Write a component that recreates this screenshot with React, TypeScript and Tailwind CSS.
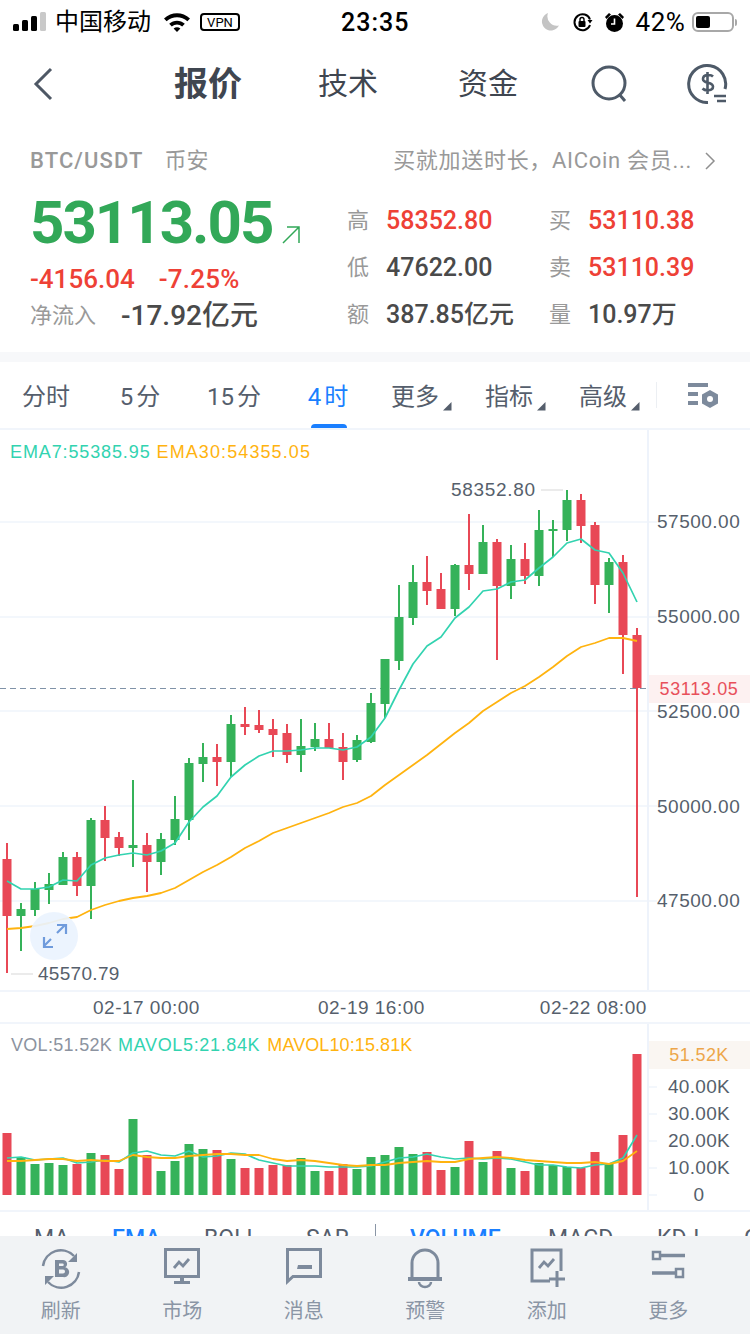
import React from "react";

type Candle = [number, number, number, number, "r" | "g"];

const GREEN = "#35b259";
const RED = "#e84856";
const TEAL = "#32d3b0";
const ORANGE = "#ffb30f";

// wickTop, wickBottom, bodyTop, bodyBottom, colour
const candles: Candle[] = [
  [843, 973, 859, 916, "r"], [903, 951, 909, 916, "g"], [882, 916, 889, 910, "g"], [873, 904, 884, 890, "g"],
  [852, 885, 857, 885, "g"], [852, 896, 857, 886, "r"], [818, 919, 820, 886, "g"], [806, 861, 820, 838, "r"],
  [832, 856, 837, 848, "r"], [780, 867, 845, 848, "g"], [833, 892, 845, 862, "r"], [833, 875, 839, 862, "g"],
  [796, 845, 819, 840, "g"], [758, 840, 763, 820, "g"], [743, 782, 757, 764, "g"], [744, 786, 757, 762, "r"],
  [715, 777, 724, 762, "g"], [707, 735, 724, 727, "r"], [710, 733, 725, 730, "r"], [719, 757, 729, 735, "r"],
  [724, 763, 733, 755, "r"], [719, 772, 746, 755, "g"], [723, 751, 739, 747, "g"], [723, 748, 739, 748, "r"],
  [733, 780, 747, 762, "r"], [735, 762, 740, 760, "g"], [693, 743, 703, 742, "g"], [659, 718, 659, 704, "g"],
  [585, 670, 617, 661, "g"], [565, 625, 582, 618, "g"], [556, 605, 582, 591, "r"], [573, 609, 589, 609, "r"],
  [564, 616, 565, 609, "g"], [514, 590, 565, 574, "r"], [525, 574, 542, 574, "g"], [539, 660, 542, 586, "r"],
  [545, 599, 559, 586, "g"], [543, 584, 559, 576, "r"], [510, 586, 530, 576, "g"], [520, 557, 529, 531, "g"],
  [490, 541, 500, 530, "g"], [494, 543, 500, 526, "r"], [522, 604, 525, 585, "r"], [558, 613, 562, 585, "g"],
  [555, 674, 562, 635, "r"], [628, 897, 635, 688, "r"],
];

const ema7 = [
  881, 889, 889, 887, 880, 881, 865, 858, 855, 853, 855, 851, 843, 822, 807, 796, 777, 765, 756, 751, 751, 750, 748,
  748, 750, 747, 737, 718, 690, 664, 646, 637, 618, 607, 591, 589, 582, 580, 568, 557, 543, 539, 550, 553, 573, 602,
];

const ema30 = [
  929, 928, 926, 923, 919, 917, 910, 905, 901, 898, 896, 893, 888, 880, 872, 865, 857, 848, 841, 833, 828, 823, 818,
  813, 807, 803, 796, 785, 775, 765, 755, 744, 733, 723, 711, 702, 693, 686, 677, 667, 656, 647, 643, 638, 638, 641,
];

const volumes = [
  1133, 1157, 1164, 1163, 1165, 1164, 1153, 1155, 1169, 1119, 1155, 1171, 1161, 1144, 1149, 1150, 1159, 1168, 1168,
  1165, 1165, 1158, 1171, 1171, 1164, 1169, 1157, 1155, 1147, 1154, 1152, 1170, 1167, 1141, 1162, 1151, 1168, 1171,
  1163, 1165, 1167, 1168, 1152, 1163, 1135, 1054,
];

const mavol5 = [
  1158, 1157, 1160, 1159, 1158, 1163, 1162, 1160, 1162, 1153, 1151, 1155, 1156, 1151, 1157, 1156, 1153, 1154, 1160,
  1163, 1166, 1166, 1166, 1167, 1167, 1167, 1166, 1162, 1158, 1157, 1154, 1157, 1159, 1158, 1159, 1158, 1159, 1162,
  1165, 1165, 1167, 1168, 1165, 1164, 1158, 1135,
];

const mavol10 = [
  1161, 1161, 1160, 1159, 1159, 1161, 1160, 1161, 1161, 1155, 1157, 1158, 1158, 1156, 1155, 1154, 1154, 1155, 1155,
  1159, 1161, 1160, 1161, 1163, 1165, 1166, 1165, 1165, 1163, 1162, 1161, 1162, 1162, 1159, 1158, 1157, 1158, 1160,
  1161, 1162, 1163, 1163, 1162, 1164, 1161, 1151,
];

const colX = (i: number) => 7 + 14 * i;
const linePoints = (ys: number[]) => ys.map((y, i) => `${colX(i)},${y}`).join(" ");

const KLine = () => (
  <svg className="absolute inset-0" width="750" height="560" viewBox="0 430 750 560">
    {[522, 617, 711, 806, 901].map((y) => (
      <line key={y} x1="0" x2="657" y1={y} y2={y} stroke="#f3f7fc" strokeWidth="2" />
    ))}
    <line x1="0" x2="647" y1="688.5" y2="688.5" stroke="#8092a8" strokeWidth="1" strokeDasharray="6 4" />
    {candles.map(([wt, wb, bt, bb, c], i) => {
      const fill = c === "r" ? RED : GREEN;
      return (
        <g key={i}>
          <rect x={colX(i) - 1} y={wt} width="2" height={wb - wt} fill={fill} />
          <rect x={colX(i) - 4.5} y={bt} width="9" height={bb - bt} fill={fill} />
        </g>
      );
    })}
    <polyline points={linePoints(ema7)} fill="none" stroke={TEAL} strokeWidth="1.7" strokeLinejoin="round" />
    <polyline points={linePoints(ema30)} fill="none" stroke={ORANGE} strokeWidth="1.8" strokeLinejoin="round" />
    <line x1="541" x2="563" y1="490" y2="490" stroke="#ebebeb" strokeWidth="2" />
    <line x1="11" x2="33" y1="974" y2="974" stroke="#ebebeb" strokeWidth="2" />
    <circle cx="54" cy="936" r="24" fill="#eaf3fe" fillOpacity="0.92" />
    <g fill="none" stroke="#6f9bdc" strokeWidth="2.2">
      <path d="M57 933l8-8M57 925h9v9" />
      <path d="M51 939l-7 7M44 937v10h9" />
    </g>
  </svg>
);

const VolumeChart = () => (
  <svg className="absolute inset-0" width="750" height="186" viewBox="0 1024 750 186">
    {[1087, 1114, 1141, 1168, 1195].map((y) => (
      <line key={y} x1="647" x2="657" y1={y} y2={y} stroke="#f3f7fc" strokeWidth="2" />
    ))}
    {volumes.map((top, i) => (
      <rect
        key={i}
        x={colX(i) - 4.5}
        y={top}
        width="9"
        height={1195 - top}
        fill={candles[i][4] === "r" ? RED : GREEN}
      />
    ))}
    <polyline points={linePoints(mavol5)} fill="none" stroke={TEAL} strokeWidth="1.7" strokeLinejoin="round" />
    <polyline points={linePoints(mavol10)} fill="none" stroke={ORANGE} strokeWidth="1.8" strokeLinejoin="round" />
  </svg>
);

const StatusBar = () => (
  <div className="relative flex h-[44px] items-center pl-[13px] text-black">
    <svg width="34" height="20" viewBox="0 0 34 20">
      <rect x="0" y="12" width="6" height="7" rx="1.5" fill="#000" />
      <rect x="9" y="8" width="6" height="11" rx="1.5" fill="#000" />
      <rect x="18" y="4" width="6" height="15" rx="1.5" fill="#000" />
      <rect x="27" y="0" width="6" height="19" rx="1.5" fill="#c9c9c9" />
    </svg>
    <span className="ml-[8px] text-[24px] leading-none">中国移动</span>
    <svg className="ml-[12px]" width="28" height="22" viewBox="0 0 28 22">
      <path d="M1 7.5C8.5 .5 19.5 .5 27 7.5l-2.6 2.8C18.5 4.8 9.5 4.8 3.6 10.3z" fill="#000" />
      <path d="M6.2 12.8c4.6-4.2 11-4.2 15.6 0l-2.6 2.8c-3.1-2.7-7.3-2.7-10.4 0z" fill="#000" />
      <path d="M10.6 17.4c2-1.6 4.8-1.6 6.8 0L14 21z" fill="#000" />
    </svg>
    <span className="ml-[9px] flex h-[18px] w-[40px] items-center justify-center rounded-[4px] border-2 border-black text-[13px] leading-none">
      VPN
    </span>
    <span className="ml-[101px] text-[25px] font-medium leading-none tracking-[1px]">23:35</span>
    <svg className="ml-[131px]" width="20" height="20" viewBox="0 0 20 20">
      <path d="M8 1a9 9 0 1 0 11 12.5A9.5 9.5 0 0 1 8 1z" fill="#c4c4c4" />
    </svg>
    <svg className="ml-[12px]" width="21" height="21" viewBox="0 0 21 21">
      <path d="M18 13a8 8 0 1 1 0-5.500" fill="none" stroke="#000" strokeWidth="2" />
      <path d="M15.500 8h5l-2.500 3.500z" fill="#000" />
      <rect x="6.500" y="9" width="7" height="6" rx="1" fill="#000" />
      <path d="M8 9V7.500a2 2 0 0 1 4 0V9" fill="none" stroke="#000" strokeWidth="1.400" />
    </svg>
    <svg className="ml-[11px]" width="21" height="21" viewBox="0 0 21 21">
      <circle cx="10.500" cy="11.500" r="8.500" fill="#000" />
      <path d="M10.500 6.500v5.500H7" fill="none" stroke="#fff" strokeWidth="1.600" />
      <path d="M1 5l4-4 2 1.500-4.500 4.500zM20 5l-4-4-2 1.500 4.500 4.500z" fill="#000" />
    </svg>
    <span className="ml-[10px] text-[26px] leading-none tracking-[0.6px]">42%</span>
    <div className="relative ml-[6px] h-[20px] w-[42px] rounded-[6px] border-2 border-[#a8a8a8] p-[2px]">
      <div className="h-full w-[14px] rounded-[2px] bg-black" />
    </div>
    <div className="ml-[1px] h-[7px] w-[2px] rounded-r-[2px] bg-[#a8a8a8]" />
  </div>
);

const NavBar = () => (
  <div className="flex h-[80px] items-center">
    <svg className="ml-[33px]" width="20" height="34" viewBox="0 0 20 34">
      <path d="M18 2L3 17l15 15" fill="none" stroke="#4e5865" strokeWidth="3" />
    </svg>
    <span className="ml-[121px] text-[34px] font-bold leading-none text-[#3f4650]">报价</span>
    <span className="ml-[76px] text-[30px] leading-none text-[#3f4650]">技术</span>
    <span className="ml-[80px] text-[30px] leading-none text-[#3f4650]">资金</span>
    <svg className="ml-[72px]" width="40" height="38" viewBox="0 0 40 38">
      <circle cx="19" cy="18" r="16" fill="none" stroke="#4e5a68" strokeWidth="3" />
      <path d="M29 29l6 7" fill="none" stroke="#4e5a68" strokeWidth="3" />
    </svg>
    <svg className="ml-[56px]" width="42" height="40" viewBox="0 0 42 40">
      <path d="M39 25A18.500 18.500 0 1 0 22 38.500" fill="none" stroke="#4e5a68" strokeWidth="3" />
      <path d="M27 12.500c-2-2-10-2.500-10 2.500 0 5 10 2.500 10 7.500 0 5-8 4.500-10.500 2M21.500 8v22" fill="none" stroke="#4e5a68" strokeWidth="2.600" />
      <path d="M28 32h12M31 37h9" stroke="#4e5a68" strokeWidth="2.600" />
    </svg>
  </div>
);

const QuoteCell = ({ label, value, red }: { label: string; value: string; red?: boolean }) => (
  <div className="flex h-[47px] items-center">
    <span className="w-[39px] text-[22px] leading-none text-[#999999]">{label}</span>
    <span className={red ? "text-[25px] font-medium leading-none text-[#ee4136]" : "text-[25px] font-medium leading-none text-[#4a4a4a]"}>
      {value}
    </span>
  </div>
);

const Quote = () => (
  <div className="h-[222px] px-[30px] pt-[20px]">
    <div className="flex h-[22px] items-center text-[22px] leading-none text-[#999999]">
      <span className="font-medium tracking-[1.1px]">BTC/USDT</span>
      <span className="ml-[21px]">币安</span>
      <span className="ml-auto tracking-[0.7px]">买就加送时长，AICoin 会员...</span>
      <svg className="ml-[12px] mr-[4px]" width="12" height="18" viewBox="0 0 12 18">
        <path d="M2 1l8 8-8 8" fill="none" stroke="#8f8f8f" strokeWidth="1.500" />
      </svg>
    </div>
    <div className="flex">
      <div className="w-[317px]">
        <div className="mt-[26px] flex h-[50px] items-center">
          <span className="text-[60px] font-bold leading-none tracking-[-2px] text-[#32a858]">53113.05</span>
          <svg className="ml-[9px] mt-[24px]" width="20" height="20" viewBox="0 0 20 20">
            <path d="M2 18L18 2M6 2h12v16" fill="none" stroke="#32a858" strokeWidth="1.500" />
          </svg>
        </div>
        <div className="mt-[18px] flex h-[26px] items-center text-[26px] font-medium leading-none text-[#ee4136]">
          <span>-4156.04</span>
          <span className="ml-[24px] tracking-[0.2px]">-7.25%</span>
        </div>
        <div className="mt-[9px] flex h-[30px] items-center">
          <span className="text-[22px] leading-none text-[#999999]">净流入</span>
          <span className="ml-[25px] text-[28px] font-medium leading-none text-[#4a4a4a]">-17.92亿元</span>
        </div>
      </div>
      <div className="mt-[25px] grid h-[141px] grid-cols-[202px_1fr]">
        <QuoteCell label="高" value="58352.80" red />
        <QuoteCell label="买" value="53110.38" red />
        <QuoteCell label="低" value="47622.00" />
        <QuoteCell label="卖" value="53110.39" red />
        <QuoteCell label="额" value="387.85亿元" />
        <QuoteCell label="量" value="10.97万" />
      </div>
    </div>
  </div>
);

const PeriodTab = ({ digit, text, active, menu }: { digit?: string; text: string; active?: boolean; menu?: boolean }) => (
  <div className={menu ? "relative flex h-full w-[94px] items-center justify-center pr-[14px] pt-[3px]" : "relative flex h-full w-[94px] items-center justify-center pt-[3px]"}>
    <span className={active ? "text-[24px] leading-none text-[#1a7fff]" : "text-[24px] leading-none text-[#555e6c]"}>
      {digit && <span className="mr-[3px]">{digit}</span>}
      {text}
    </span>
    {menu && (
      <svg className="absolute right-[17px] top-[39px]" width="10" height="10" viewBox="0 0 10 10">
        <path d="M9.500 1v8.500H1z" fill="#555e6c" />
      </svg>
    )}
    {active && <div className="absolute bottom-0 left-[30px] h-[4px] w-[36px] rounded-t-[4px] bg-[#1a7fff]" />}
  </div>
);

const PeriodBar = () => (
  <div className="flex h-[68px] items-center border-b-2 border-[#f1f5fb]">
    <div className="-ml-px flex h-full">
      <PeriodTab text="分时" />
      <PeriodTab digit="5" text="分" />
      <PeriodTab digit="15" text="分" />
      <PeriodTab digit="4" text="时" active />
      <PeriodTab text="更多" menu />
      <PeriodTab text="指标" menu />
      <PeriodTab text="高级" menu />
    </div>
    <div className="ml-[-1px] h-[26px] w-px bg-[#eceff3]" />
    <svg className="ml-[31px]" width="32" height="26" viewBox="0 0 32 26">
      <path d="M0 1h20v4H0zM0 10h10v4H0zM0 19h10v4H0z" fill="#7d8a9c" />
      <path d="M22 8l8 4.500v9L22 26l-8-4.500v-9z" fill="#7d8a9c" />
      <circle cx="22" cy="17" r="3" fill="#fff" />
    </svg>
  </div>
);

const IndicatorBar = () => (
  <div className="relative h-[26px] overflow-hidden border-t-2 border-[#f1f5fb] text-[23px] leading-none text-[#555e6c]">
    <span className="absolute left-[34px] top-[15px]">MA</span>
    <span className="absolute left-[112px] top-[15px] font-medium text-[#1a7fff]">EMA</span>
    <span className="absolute left-[204px] top-[15px]">BOLL</span>
    <span className="absolute left-[306px] top-[15px]">SAR</span>
    <div className="absolute left-[375px] top-[12px] h-[16px] w-px bg-[#8a96a6]" />
    <span className="absolute left-[410px] top-[15px] font-medium text-[#1a7fff]">VOLUME</span>
    <span className="absolute left-[548px] top-[15px]">MACD</span>
    <span className="absolute left-[657px] top-[15px]">KDJ</span>
    <span className="absolute left-[744px] top-[15px]">C</span>
  </div>
);

const BottomItem = ({ label, children }: { label: string; children: React.ReactNode }) => (
  <div className="flex w-[121.5px] flex-col items-center pt-[11px]">
    <div className="h-[44px] w-[44px]">{children}</div>
    <span className="mt-[10px] text-[20px] leading-none text-[#8a95a5]">{label}</span>
  </div>
);

const BottomBar = () => (
  <div className="flex h-[98px] bg-[#f1f3f5]">
    <BottomItem label="刷新">
      <svg width="44" height="44" viewBox="0 0 44 44">
        <path d="M4 19A18 18 0 0 1 35 9M40 25A18 18 0 0 1 9 35" fill="none" stroke="#7d8a9c" strokeWidth="2.500" />
        <path d="M38 6v9h-9zM6 38v-9h9z" fill="#7d8a9c" />
        <path d="M16 13h8a4 4 0 0 1 2.300 7.300A4.600 4.600 0 0 1 24 30h-8zM20 16.500v2.500h3.500a1.200 1.200 0 0 0 0-2.500zM20 22.500v4h4a2 2 0 0 0 0-4z" fill="#7d8a9c" fillRule="evenodd" />
      </svg>
    </BottomItem>
    <BottomItem label="市场">
      <svg width="44" height="44" viewBox="0 0 44 44">
        <rect x="5.500" y="2.500" width="33" height="27" fill="none" stroke="#7d8a9c" strokeWidth="3" />
        <path d="M14 21l5-6 4 4 6-7" fill="none" stroke="#7d8a9c" strokeWidth="2.800" />
        <path d="M20 30h4v4h6v3H14v-3h6z" fill="#7d8a9c" />
      </svg>
    </BottomItem>
    <BottomItem label="消息">
      <svg width="44" height="44" viewBox="0 0 44 44">
        <path d="M5.500 2.500h33v27H11l-5.500 5z" fill="none" stroke="#7d8a9c" strokeWidth="3" />
        <path d="M16 18h14v4H15z" fill="#7d8a9c" />
      </svg>
    </BottomItem>
    <BottomItem label="预警">
      <svg width="44" height="44" viewBox="0 0 44 44">
        <path d="M9 31V16a13 13 0 0 1 26 0v15" fill="none" stroke="#7d8a9c" strokeWidth="3" />
        <path d="M5 30h34v4H5z" fill="#7d8a9c" />
        <path d="M16 35a6 5 0 0 0 12 0" fill="none" stroke="#7d8a9c" strokeWidth="2.500" />
      </svg>
    </BottomItem>
    <BottomItem label="添加">
      <svg width="44" height="44" viewBox="0 0 44 44">
        <path d="M36 24V3H7v31h18" fill="none" stroke="#7d8a9c" strokeWidth="3" />
        <path d="M14 21l5-6 4 4 6-7" fill="none" stroke="#7d8a9c" strokeWidth="2.800" />
        <path d="M32 24v16M24 32h16" stroke="#7d8a9c" strokeWidth="3" />
      </svg>
    </BottomItem>
    <BottomItem label="更多">
      <svg width="44" height="44" viewBox="0 0 44 44">
        <rect x="7" y="5" width="7" height="7" fill="none" stroke="#7d8a9c" strokeWidth="2.500" />
        <path d="M15 8.500h24" stroke="#7d8a9c" strokeWidth="3.500" />
        <rect x="30" y="22" width="7" height="8" fill="none" stroke="#7d8a9c" strokeWidth="2.500" />
        <path d="M6 26h23" stroke="#7d8a9c" strokeWidth="3.500" />
      </svg>
    </BottomItem>
  </div>
);

export default function App() {
  return (
    <div className="h-[1334px] w-[750px] overflow-hidden bg-white font-['Roboto','Noto_Sans_CJK_SC',sans-serif]">
      <StatusBar />
      <NavBar />
      <div className="h-[6px]" />
      <Quote />
      <div className="h-[10px] bg-[#f7f8fa]" />
      <PeriodBar />

      <div className="relative h-[560px] font-['Liberation_Sans','Noto_Sans_CJK_SC',sans-serif]">
        <KLine />
        <div className="absolute left-[10px] top-[12px] text-[18px] leading-[20px] tracking-[0.88px]">
          <span className="text-[#32d3b0]">EMA7:55385.95</span>
          <span className="ml-[6px] tracking-[1.1px] text-[#ffb30f]">EMA30:54355.05</span>
        </div>
        <span className="absolute left-[451px] top-[49px] text-[19px] leading-[22px] tracking-[0.7px] text-[#565f6c]">58352.80</span>
        <span className="absolute left-[38px] top-[533px] text-[19px] leading-[22px] tracking-[0.3px] text-[#565f6c]">45570.79</span>
        <span className="absolute left-[657px] top-[81px] text-[19px] leading-[22px] tracking-[0.5px] text-[#565f6c]">57500.00</span>
        <span className="absolute left-[657px] top-[176px] text-[19px] leading-[22px] tracking-[0.5px] text-[#565f6c]">55000.00</span>
        <span className="absolute left-[657px] top-[271px] text-[19px] leading-[22px] tracking-[0.5px] text-[#565f6c]">52500.00</span>
        <span className="absolute left-[657px] top-[366px] text-[19px] leading-[22px] tracking-[0.5px] text-[#565f6c]">50000.00</span>
        <span className="absolute left-[657px] top-[460px] text-[19px] leading-[22px] tracking-[0.5px] text-[#565f6c]">47500.00</span>
        <div className="absolute left-[648px] top-[245px] flex h-[28px] w-[102px] items-center justify-center bg-[#fdf1f1] text-[18px] leading-none tracking-[0.65px] text-[#e8505b]">
          53113.05
        </div>
        <div className="absolute bottom-0 left-[647px] top-0 w-[2px] bg-[#eef3fb]" />
      </div>

      <div className="flex h-[34px] items-center border-y-2 border-[#f1f5fb] pt-[1px] font-['Liberation_Sans',sans-serif] text-[19px] leading-none tracking-[0.5px] text-[#565f6c]">
        <span className="ml-[93px]">02-17 00:00</span>
        <span className="ml-[118px]">02-19 16:00</span>
        <span className="ml-[115px]">02-22 08:00</span>
      </div>

      <div className="relative h-[186px] font-['Liberation_Sans',sans-serif]">
        <VolumeChart />
        <div className="absolute left-[11px] top-[11px] text-[18px] leading-[20px] tracking-[0.3px]">
          <span className="text-[#8c93a0]">VOL:51.52K</span>
          <span className="ml-[6px] tracking-[0.65px] text-[#32d3b0]">MAVOL5:21.84K</span>
          <span className="ml-[7px] tracking-[0.1px] text-[#ffb30f]">MAVOL10:15.81K</span>
        </div>
        <div className="absolute left-[648px] top-[17px] flex h-[28px] w-[102px] items-center justify-center bg-[#faf6f2] text-[18px] leading-none tracking-[0.4px] text-[#eda64a]">
          51.52K
        </div>
        <div className="absolute left-[649px] top-[49px] flex w-[100px] flex-col items-center text-[19px] leading-[27px] tracking-[0.3px] text-[#565f6c]">
          <span>40.00K</span>
          <span>30.00K</span>
          <span>20.00K</span>
          <span>10.00K</span>
          <span>0</span>
        </div>
        <div className="absolute bottom-0 left-[647px] top-0 w-[2px] bg-[#eef3fb]" />
      </div>

      <IndicatorBar />
      <BottomBar />
    </div>
  );
}
